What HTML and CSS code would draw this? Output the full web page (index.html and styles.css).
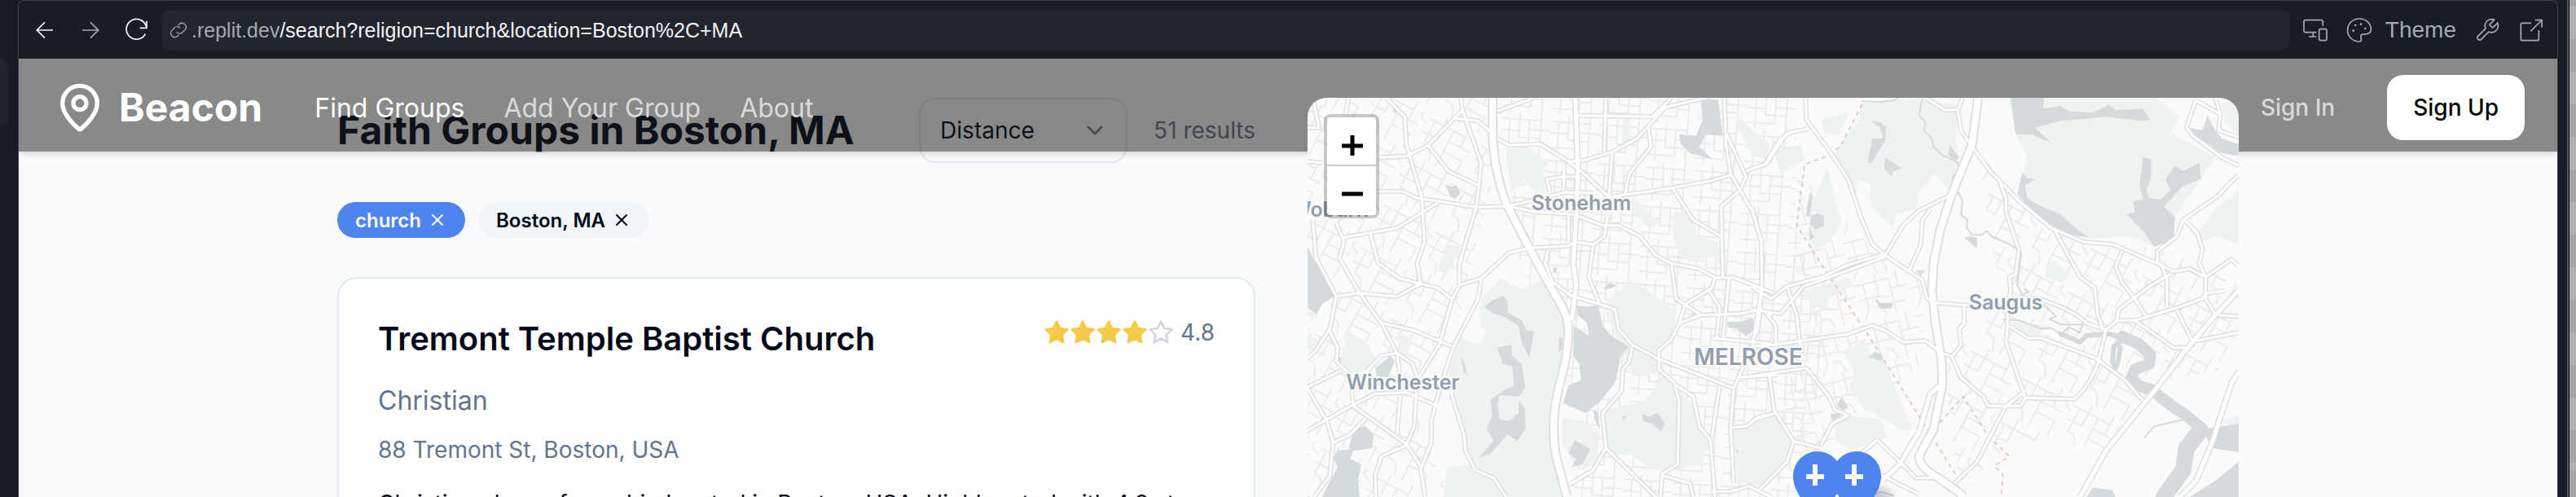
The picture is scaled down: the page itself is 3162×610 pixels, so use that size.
FILE: index.html
```html
<!DOCTYPE html>
<html lang="en">
<head>
<meta charset="utf-8">
<title>Beacon – Faith Groups in Boston, MA</title>
<link rel="stylesheet" href="styles.css">
</head>
<body>
<div class="workspace">
  <div class="side-pane"><div class="side-tab"></div></div>
  <section class="preview">
    <div class="toolbar">
      <div class="tool-nav">
        <button class="tool bright" aria-label="Back"><svg class="icon" viewBox="0 0 24 24"><path d="M19.5 12H5M12 4.7L4.7 12l7.3 7.3"/></svg></button>
        <button class="tool" aria-label="Forward"><svg class="icon" viewBox="0 0 24 24"><path d="M4.5 12H19M12 4.7l7.3 7.3-7.3 7.3"/></svg></button>
        <button class="tool bright" aria-label="Reload"><svg class="icon" viewBox="0 0 24 24"><path d="M21.5 10H15.5M21.8 3.5V10H15.5M21.6 9.8A9.3 9.3 0 1 0 20.6 15.500"/></svg></button>
      </div>
      <label class="address">
        <svg class="icon link-icon" viewBox="0 0 24 24"><path d="M10 14.500a5 5 0 0 0 7 .2l3.300-3.300a5 5 0 0 0-7-7L11.500 6.200M14 9.500a5 5 0 0 0-7-.2l-3.300 3.300a5 5 0 0 0 7 7l1.800-1.800"/></svg>
        <span class="host">.replit.dev</span><input class="path" type="text" aria-label="Address" value="/search?religion=church&amp;location=Boston%2C+MA">
      </label>
      <div class="tool-actions">
        <button class="tool" aria-label="Devices"><svg class="icon" viewBox="0 0 24 24"><path d="M19 8V4.200A1.500 1.500 0 0 0 17.500 2.800H3A1.500 1.500 0 0 0 1.500 4.200V12.500A1.500 1.500 0 0 0 3 14H13M10 14v4M6 18h7"/><rect x="15.500" y="11" width="7" height="10.500" rx="1.200"/></svg></button>
        <button class="tool theme"><svg class="icon" viewBox="0 0 24 24"><path d="M12 1.500C6 1.500 1.200 6 1.200 12S6 22.500 12 22.500c1.500 0 2-1 1.800-2.200-.5-2-1-4.300 1.500-4.500 3.500-.1 7.500-.3 7.500-4.800C22.800 5.500 18 1.500 12 1.500z"/><g class="dots"><circle cx="6.500" cy="12.500" r="1"/><circle cx="8.500" cy="7.500" r="1"/><circle cx="13.500" cy="6.500" r="1"/><circle cx="17.500" cy="10.500" r="1"/></g></svg><span>Theme</span></button>
        <button class="tool" aria-label="Tools"><svg class="icon" viewBox="0 0 24 24"><path d="M14.700 6.300a1 1 0 0 0 0 1.400l1.600 1.600a1 1 0 0 0 1.400 0l3.770-3.770a6 6 0 0 1-7.940 7.940l-6.910 6.910a2.120 2.120 0 0 1-3-3l6.910-6.910a6 6 0 0 1 7.940-7.940l-3.760 3.760z"/></svg></button>
        <button class="tool" aria-label="Open in new tab"><svg class="icon" viewBox="0 0 24 24"><path d="M12 5.500H4A1.500 1.500 0 0 0 2.500 7V20A1.500 1.500 0 0 0 4 21.500H17.500A1.500 1.500 0 0 0 19 20V12M11.500 13L21.500 3M15.500 2.700H21.800V9.500"/></svg></button>
      </div>
    </div>

    <div class="page">
      <header class="site-header">
        <a class="brand" href="#"><svg class="pin" viewBox="0 0 24 24"><path d="M20 10c0 4.993-5.539 10.193-7.399 11.799a1 1 0 0 1-1.202 0C9.539 20.193 4 14.993 4 10a8 8 0 0 1 16 0"/><circle cx="12" cy="10" r="3"/></svg>Beacon</a>
        <nav class="main-nav"><a class="active" href="#">Find Groups</a><a href="#">Add Your Group</a><a href="#">About</a></nav>
        <div class="account"><a href="#">Sign In</a><button class="sign-up">Sign Up</button></div>
      </header>

      <main class="content">
        <section class="results">
          <div class="results-head">
            <h1>Faith Groups in Boston, MA</h1>
            <div class="sort">
              <div class="select-wrap"><select aria-label="Sort by"><option>Distance</option></select><svg class="chevron" viewBox="0 0 24 24"><path d="M6 9l6 6 6-6"/></svg></div>
              <span class="count">51 results</span>
            </div>
          </div>
          <div class="chips">
            <button class="chip primary">church<svg viewBox="0 0 24 24"><path d="M18 6L6 18M6 6l12 12"/></svg></button>
            <button class="chip">Boston, MA<svg viewBox="0 0 24 24"><path d="M18 6L6 18M6 6l12 12"/></svg></button>
          </div>
          <article class="card">
            <div class="card-head">
              <h2>Tremont Temple Baptist Church</h2>
              <div class="rating">
                <svg class="stars" viewBox="0 0 120 24"><defs><path id="star" d="M12 2l3.090 6.260L22 9.270l-5 4.870 1.180 6.880L12 17.770l-6.180 3.250L7 14.140 2 9.270l6.910-1.010L12 2z"/></defs><g class="full"><use href="#star"/><use href="#star" x="24"/><use href="#star" x="48"/><use href="#star" x="72"/></g><use class="empty" href="#star" x="96"/></svg>
                <span>4.8</span>
              </div>
            </div>
            <p class="faith">Christian</p>
            <p class="street">88 Tremont St, Boston, USA</p>
            <p class="about">Christian place of worship located in Boston, USA. Highly rated with 4.8 stars</p>
          </article>
        </section>

        <section class="map" aria-label="Map">
          <svg class="map-art" viewBox="0 0 1143 600">
            <defs>
              <pattern id="streets-a" width="66" height="54" patternUnits="userSpaceOnUse" patternTransform="rotate(-14)"><path d="M0 9H44M12 9V40M28 0V28L40 32M0 28H28M44 9V54M44 22H66M44 40H58M12 40L4 54M54 0V22M20 40Q30 36 32 54"/></pattern>
              <pattern id="streets-b" width="72" height="60" patternUnits="userSpaceOnUse" patternTransform="rotate(28)"><path d="M0 12H50M8 12V44M20 0V30H0M34 12V60M34 26H64M34 40H60M50 0V26M60 40V60M8 44Q20 40 24 60M64 8Q56 14 72 20"/></pattern>
              <pattern id="streets-c" width="60" height="48" patternUnits="userSpaceOnUse" patternTransform="rotate(4)"><path d="M0 8H48M10 8V48M22 0V30M34 8V40M0 22H22M34 20H60M22 30H48M48 0V48M0 40H34"/></pattern>
              <g id="highways">
                <g transform="translate(-5 -10) scale(.3827 .3333)"><path d="M607 30V180Q612 300 650 420L700 530 770 680 830 800Q852 850 850 900 845 1000 820 1090L808 1160Q795 1260 812 1360L845 1500"/></g>
                <g transform="translate(545 -10) scale(.3954 .3333)"><path d="M703 30L685 200 620 390 585 520 565 640 560 740 570 850 590 1000 592 1090 565 1250 520 1350Q520 1390 580 1430L640 1480 660 1500"/></g>
              </g>
              <g id="main-roads">
                <g transform="translate(-5 -10) scale(.3827 .3333)"><path d="M872 30L880 300 875 460 865 640 875 720 860 850"/></g>
                <g transform="translate(545 -10) scale(.3954 .3333)"><path d="M590 1085L555 1120 520 1260 460 1380 405 1440M1512 740L1440 830 1340 970 1250 1110 1100 1330 1020 1500M1512 1040L1490 1080 1430 1300 1380 1440 1330 1500"/></g>
              </g>
              <g id="roads">
                <g transform="translate(-5 -10) scale(.3827 .3333)">
                  <path d="M622 80L740 30M622 180L660 205 760 200 850 265 900 310 980 395 1110 375 1180 362 1310 335 1370 315M880 95L1120 100 1180 30M970 30L965 230M850 265L900 260 990 230 1070 180 1160 65 1290 30M1105 130L1115 210 1045 310 1032 385M990 230L980 395M505 30L510 75 400 205 330 245 245 250M510 75L570 270 555 430 500 640V720L475 780 435 940 370 1060M480 105L560 115 610 165M400 205L465 300 565 355"/>
                  <path d="M265 30L325 100 330 200 380 400 388 560 365 640 375 715M235 375H320L360 398 555 433 650 430 730 410 840 378 930 380M125 545L300 510 440 410M500 720L570 695 660 600 730 583 850 575 870 560 930 570 965 540 975 470M660 430L740 450 870 460 960 500H1010L1080 540 1130 610 1180 640 1270 660 1320 692H1380L1510 750M215 530L240 640 310 695 375 715 430 730 475 770M375 715L300 762 180 750 110 760M105 490L130 560 115 620 180 750 250 860 300 970 310 1060"/>
                  <path d="M30 480L40 620 105 760 85 880 40 960 13 990M250 860L350 885 475 945M570 700L560 770 480 950 435 1110 410 1220V1300L375 1400M13 1095L120 1035M80 880L110 950 105 1000 150 1050M13 1255L160 1160 230 1120 330 1115 430 1165M13 1100L75 1220 95 1300 85 1420 35 1500M155 1110L160 1165 330 1305 375 1385 390 1500M200 1040L250 980 300 970 350 1010 365 1060 355 1240 330 1310 250 1350 230 1420 232 1500M310 1130L300 1270M95 1300L150 1270 200 1210M475 1120L490 1180 515 1270 520 1330 550 1400 610 1430 650 1500"/>
                  <path d="M785 590L775 640 800 710 860 760 950 790 1000 810 1010 880 1055 940 1135 990 1380 1100M930 570L915 690 950 790M1055 940L1045 1000 1025 1030 1020 1110 960 1190 970 1320 1130 1500M1180 640L1195 770 1275 830 1400 825 1470 810 1500 830M1320 692L1310 730 1225 790 1205 860M1275 830L1205 860 1180 920 1140 960V1030L1190 1080 1205 1150 1200 1380 1150 1415 1145 1500M1190 1085L1250 1130 1270 1240 1305 1290 1320 1500M970 1320L930 1400 860 1450M1350 30L1355 200 1370 310 1440 450 1470 560V730L1440 940 1380 1100 1370 1240 1380 1450M1355 160L1420 320 1400 370 1340 430 1345 690M1185 365L1250 480 1340 540M1300 740L1335 800 1325 920M1365 692L1345 920M1310 915L1500 935M1395 1060L1520 1050M1335 1090L1310 1280M1370 1245L1420 1240 1460 1205 1520 1190M13 140H50L30 30M145 30L135 90M13 265L60 270M835 320L780 330 790 375M835 320H880M835 300V370M850 460V560M1420 300L1480 275 1530 180 1568 155M1150 1420L1240 1450 1250 1500M1310 1480H1370L1430 1460 1500 1500"/>
                </g>
                <g transform="translate(545 -10) scale(.3954 .3333)">
                  <path d="M168 30L170 110 250 240 300 330 340 470 375 570 415 610 490 670 530 700 545 770 570 785 680 795M0 290L45 275 110 160 175 145M0 430L30 560 32 740 20 880 0 935M0 725L60 770 110 725 220 690 300 645 415 605M415 615L220 700 160 725 130 770 90 825 0 810M110 725L140 830 150 935M0 945L70 940 300 900 375 868 420 890 470 930 540 925 590 970 620 980 650 1060 720 1130 735 1165H835L850 1135 1000 1140Q1040 1110 1075 1010L1100 885M415 610L470 500 520 445 625 385M555 440L530 480 525 570 490 665M540 30L600 75H640L655 30M40 815L75 870V940"/>
                  <path d="M640 75L650 150 685 210 740 300 790 360 830 410 930 510 1030 560 1120 570 1200 610 1260 640 1310 670 1360 660 1410 690 1490 625 1512 650M770 340L790 400V450L830 590 820 680 800 690 805 740 795 780V870L790 930 850 1135M850 1110L790 1165 700 1370 630 1450M800 870L860 915H900L1070 990 1160 1070 1215 1145M830 765L895 770 960 800 1010 830 1040 860 1100 885 1135 850 1190 850 1310 950H1350M660 795V860L645 880 650 940 625 980M940 515L1020 690 1065 730 1075 830 1090 880M1150 595L1130 650 1150 710 1190 770 1225 835M1135 845L1140 810 1240 720 1300 680M1190 850L1330 800 1400 770 1410 750 1470 740"/>
                  <path d="M1260 640V595L1320 540 1340 480 1450 390 1480 350 1512 315M1345 480L1385 530 1400 590 1390 640 1410 690V770L1440 830M1270 640L1290 700V800M1320 810L1370 930M1380 925L1512 895M1450 830L1512 835M1380 35L1350 140 1370 170 1460 250 1512 280M1440 30L1455 90 1450 150 1512 175M1380 40L1455 90M0 1055L170 1025 240 1130 260 1180 300 1200 250 1230 215 1310M55 1050L70 1180 130 1295 215 1320M0 1220L80 1190M130 1300L110 1370 20 1480M390 1290L460 1370 510 1430H560M390 1290L300 1380M405 1420L520 1490"/>
                </g>
              </g>
            </defs>
            <rect class="land" width="1143" height="600"/>
            <g class="streets">
              <path fill="url(#streets-b)" d="M0 0H225V110L190 260 130 380 175 490 240 600H0z"/>
              <path fill="url(#streets-c)" d="M235 0H600V160L640 300 600 480 560 600H300L330 380 260 200z"/>
              <path fill="url(#streets-a)" d="M600 90L690 180 760 230 750 330 620 440 580 420 600 300z"/>
              <path fill="url(#streets-b)" d="M820 60L900 160 1060 190 1143 230V330L1040 350 980 430 870 420 800 480 780 330 850 240z"/>
            </g>
            <g class="green">
              <g transform="translate(-5 -10) scale(.3827 .3333)"><path d="M630 695L700 735 770 700 840 850V930L790 1200 800 1350 830 1500H650L550 1400 490 1180 465 1040 500 915 560 935 585 900 565 860 570 770zM648 210L715 208 785 265 770 300 775 385 740 370 710 330 665 380zM460 565L503 580 500 610 460 670H428zM960 800L1050 700 1190 810V880L1140 990 1160 1040 1060 1055 1000 900zM1000 1170L1100 1150 1150 1050 1240 1150 1300 1290 1280 1380 1190 1400 1120 1400 1050 1345H1000L960 1290 970 1190zM140 890L190 920 235 990 170 1055 120 1020zM305 895L350 920 330 980 300 960zM1380 1255L1440 1240 1520 1200 1560 1290 1520 1400 1440 1455 1390 1440zM1385 85L1440 150 1495 200 1490 260 1440 240 1395 150zM1190 450H1250L1260 540 1330 560 1335 610 1270 625 1215 620 1185 550zM1060 400L1100 440 1140 490 1110 510 1060 460zM13 890L50 930 13 965zM830 1210L900 1220 950 1260 940 1380 880 1400 830 1300zM460 1390L540 1380 650 1500H450zM1025 100H1050L1045 190 1020 195zM13 760L60 790 40 840 13 830z"/></g>
              <g transform="translate(545 -10) scale(.3954 .3333)"><path d="M345 45L530 35 640 60 635 180 645 290 610 370 570 310 520 375 510 440 450 460 440 510 370 430V350L330 330 320 410 255 240 300 160 330 120zM215 110L300 85 270 170 225 160zM70 230L150 200 165 260 90 310zM235 285L280 490 240 560 200 590 180 500 185 420 215 350zM800 30H1255L1330 100 1300 160 1440 250 1330 440 1250 580 1180 540 1050 550 830 410 855 240 820 170zM1390 520L1440 440 1512 370V570L1450 540 1400 560zM350 925L380 1000 410 990 500 1250 470 1255 390 1200 350 1170 300 1100 320 1060 290 960zM160 740L300 690 315 720 240 770 230 815 190 790zM910 650L940 630 990 680 960 710 915 690zM805 855L930 870 890 905 850 900zM0 1220L70 1200 125 1300 100 1370 30 1460 0 1450zM260 1200L400 1210 420 1280 310 1330 260 1290zM1460 1220L1512 1200V1260zM1460 50L1512 30V170L1470 120z"/></g>
            </g>
            <g class="water">
              <g transform="translate(-5 -10) scale(.3827 .3333)"><path d="M13 580L40 640 95 720 100 760 60 790 40 825 13 800zM1275 40L1300 34 1330 38 1345 170 1290 165 1270 210 1310 255 1240 235 1210 200 1205 165 1260 170 1280 110zM455 350L475 358 490 350 503 380 485 405 470 390zM580 800L600 780 640 760 655 780V820L700 850 715 885 740 890 735 920 725 990 700 930 690 870 640 835 610 825zM620 950L668 940V980L700 1010 712 1100 690 1130 630 1125 622 1160 630 1215 660 1220 690 1190V1145L710 1170 712 1250 685 1295 655 1270 600 1340 562 1357 610 1290 588 1250 605 1200 600 1140 640 1110 675 1090 670 1020 640 1010zM875 795L910 800 945 795 960 870 990 910 1043 945 1015 990 1000 1080 950 1150 905 1190 833 1155 850 1090 890 1070 885 1010 865 980 868 870 915 905 910 860 880 830zM230 1025L280 980 293 1000 270 1060 235 1055zM160 1250L200 1240 225 1270 220 1320 160 1330 150 1360 185 1380 175 1440 180 1500H60L90 1430 110 1390 95 1360 110 1330 145 1325zM870 1290L890 1305 920 1325 895 1380 860 1390 875 1360 850 1340zM1085 1195L1110 1205 1135 1190 1160 1230 1145 1260 1120 1230 1090 1220zM1360 855L1400 855 1440 840 1448 880 1420 908 1390 880 1360 875zM820 910L832 915 830 960 818 965zM960 735L980 712 1003 720 985 733zM505 985L515 1000 525 1050 515 1045zM930 1180L945 1190 950 1250 935 1220zM800 655L815 655 810 678 802 672zM105 985L122 985 120 1005 105 1003zM285 75L300 70 295 90zM1022 1205L1035 1200 1025 1218zM1385 1325L1397 1330 1390 1340z"/></g>
              <g transform="translate(545 -10) scale(.3954 .3333)"><path d="M805 30H908L905 70 960 60 985 80 1060 85 1110 55 1130 75 1215 70 1238 112 1210 115 1100 100 960 115 880 140 930 195 870 165H820zM370 115L400 120 418 140 415 190 385 245 370 275 360 265 375 180 408 180 400 140zM415 250L467 290 440 300 435 320 412 290zM615 205L645 250 630 262 610 240zM840 305L855 325 880 330 850 350 855 400 900 430 960 460 1000 505 1050 545 1000 535 920 505 825 385zM1215 250L1240 255V330L1225 370 1235 400 1270 405 1300 370 1285 330 1315 280 1340 300 1390 270 1395 330 1340 355 1280 430 1315 470 1310 550 1250 580 1215 520 1165 460 1190 450 1185 410 1215 405 1205 350zM1360 140L1400 150 1415 95 1435 140 1460 180 1512 200V245L1450 230 1420 200 1380 180zM180 380L190 390 180 470 168 465zM185 465L205 455 225 465V500L200 515 180 495zM178 505L195 545 180 555zM660 545L680 540 700 545V585L680 565zM380 765L400 785 440 785 435 805 400 808zM365 985L385 962 410 990 395 998zM265 1160L280 1130 300 1170 285 1185zM245 1195L290 1190 250 1220zM510 665H540L525 685zM1400 1250L1512 1230V1335L1430 1320zM1512 1370V1500H1360L1440 1440zM1040 1500L1060 1465 1120 1475 1130 1500z"/></g>
            </g>
            <g class="rivers" transform="translate(545 -10) scale(.3954 .3333)">
              <path class="creek" d="M345 42L400 46 440 40 455 32M530 35L520 95 540 120 535 150 560 180 565 210 590 240 610 250 640 270 645 300 625 320V350L645 385 655 410 650 460 670 480 668 510 685 535 715 535 730 520 745 540 810 575 838 600 830 660 825 720 840 755 860 745 850 735"/>
              <path class="creek" d="M780 845L830 850 900 880 930 878 960 900 985 875 1020 895 1028 865 960 865 925 845 945 835 905 790M1220 1280L1250 1240 1340 1215M365 1500L400 1480 440 1495"/>
              <path class="river" d="M960 900L990 915 1020 930 1040 905 1110 900 1150 915"/>
              <path class="river" d="M1150 925L1125 945 1120 1000 1130 1025 1138 1000 1145 950"/>
              <path class="river wide" d="M1150 910L1200 935 1238 975 1235 1010 1190 1030 1180 1060 1200 1090 1240 1105"/>
              <path class="river wide" d="M1240 1105L1300 1160 1350 1200 1400 1250"/>
              <path class="river delta" d="M1390 1260L1350 1320 1340 1400 1280 1500"/>
            </g>
            <g class="border" transform="translate(545 -10) scale(.3954 .3333)"><path d="M343 55L275 210 235 245 165 275 140 500 220 650 360 900 540 1240 635 1420M585 1225L657 1130 735 1275 800 1350 755 1385 780 1420 775 1500"/></g>
            <use class="casing" href="#roads"/><use class="casing main" href="#main-roads"/><use class="casing highway" href="#highways"/>
            <use class="fill" href="#roads"/><use class="fill main" href="#main-roads"/><use class="fill highway" href="#highways"/>
            <g class="places">
              <text x="336" y="138" text-anchor="middle">Stoneham</text>
              <text x="75" y="146" text-anchor="end">Woburn</text>
              <text x="117" y="358" text-anchor="middle">Winchester</text>
              <text x="857" y="260" text-anchor="middle">Saugus</text>
              <text class="city" x="541" y="328" text-anchor="middle">MELROSE</text>
            </g>
            <defs><filter id="soft"><feGaussianBlur stdDeviation="6"/></filter></defs>
            <ellipse class="pin-shadow" cx="696" cy="492" rx="22" ry="14" filter="url(#soft)"/>
            <g class="marker"><path d="M626 434a30 30 0 0 1 30 30c0 22-18 36-30 56-12-20-30-34-30-56a30 30 0 0 1 30-30zM674 434a30 30 0 0 1 30 30c0 22-18 36-30 56-12-20-30-34-30-56a30 30 0 0 1 30-30z"/><path class="cross" d="M623 450V476M612 465H634M671 450V476M660 465H682"/></g>
          </svg>
          <div class="zoom"><button aria-label="Zoom in"><svg viewBox="0 0 60 60"><path d="M18 35H44M31 22V47"/></svg></button><button aria-label="Zoom out"><svg viewBox="0 0 60 60"><path d="M18 34H44"/></svg></button></div>
        </section>
      </main>
    </div>
  </section>
  <div class="gutter"></div>
  <div class="desktop"></div>
</div>
</body>
</html>
```
FILE: styles.css
```css
* { box-sizing: border-box; }
body { margin: 0; overflow: hidden; background: #191c24; font-family: Inter, "Liberation Sans", sans-serif; color: #020817; }
button, input, select { font: inherit; color: inherit; }
button { border: 0; background: none; padding: 0; cursor: pointer; }
a { color: inherit; text-decoration: none; }
h1, h2, p { margin: 0; }
svg { display: block; flex: none; }

.workspace { display: flex; height: 100vh; }
.side-pane { flex: 0 0 22px; padding-top: 72px; background: #191c24; }
.side-tab { width: 10px; height: 82px; background: #20232b; border-radius: 0 10px 10px 0; }
.preview { flex: 1; min-width: 0; display: flex; flex-direction: column; border: 1px solid #3c404a; border-bottom: 0; border-radius: 8px 8px 0 0; overflow: hidden; }
.gutter { flex: 0 0 13px; background: #191c24; border-right: 2px solid #55575c; box-shadow: 1px 0 #000; z-index: 1; }
.desktop { flex: 0 0 9px; background: repeating-linear-gradient(#a4a7a5 0 40px, #b0b0af 40px 80px) 0 -32px; }

.toolbar { flex: 0 0 71px; display: flex; align-items: center; gap: 16px; padding: 0 16px; background: #191c24; }
.tool-nav { display: flex; gap: 24px; }
.tool-actions { display: flex; gap: 22px; font-size: 28px; font-family: "Liberation Sans", sans-serif; }
.tool { display: flex; align-items: center; color: #a5a8b1; }
.tool.bright { color: #f2f3f5; }
.theme { gap: 16px; line-height: 32px; }
.icon { width: 32px; height: 32px; fill: none; stroke: currentColor; stroke-width: 1.3; }
.dots { fill: currentColor; stroke: none; }
.address { flex: 1; display: flex; align-items: center; height: 48px; padding: 0 8px; background: #22252e; border-radius: 8px; font: 25px/32px "Liberation Sans", sans-serif; color: #a5a8b1; }
.link-icon { width: 24px; height: 24px; margin-right: 4px; }
.path { flex: 1; min-width: 0; border: 0; padding: 0; background: none; color: #f2f3f5; outline: 0; }

.page { position: relative; flex: 1; min-height: 0; background: #f9fafc; }
.site-header { position: absolute; z-index: 2; top: 0; left: 0; right: 0; display: flex; align-items: center; padding: 20px 40px 14px 43px; background: rgba(30, 28, 26, .51); box-shadow: 0 2px 8px rgba(0, 0, 0, .18); color: #dadada; font-size: 32px; }
.brand { display: flex; align-items: center; gap: 16px; font-size: 48px; line-height: 64px; font-weight: 700; color: #fff; }
.pin { width: 64px; height: 64px; fill: none; stroke: currentColor; stroke-width: 2; stroke-linecap: round; stroke-linejoin: round; }
.main-nav { display: flex; gap: 48px; margin-left: 64px; }
.main-nav .active { color: #fff; }
.account { display: flex; align-items: center; gap: 64px; margin-left: auto; font-size: 28px; font-weight: 500; }
.sign-up { height: 80px; padding: 0 32px; background: #fff; color: #000; border-radius: 20px; }

.content { display: grid; grid-template-columns: 1127fr 1143fr; gap: 64px; align-items: start; max-width: 2334px; margin: 0 auto; padding-top: 48px; }
.results-head { display: flex; align-items: center; justify-content: space-between; height: 80px; }
h1 { font-size: 48px; line-height: 64px; font-weight: 700; white-space: nowrap; }
.sort { display: flex; align-items: center; gap: 32px; font-size: 28px; }
.select-wrap { position: relative; width: 256px; }
.select-wrap select { width: 100%; height: 80px; padding: 0 24px; border: 2px solid #e2e8f0; border-radius: 20px; background: none; appearance: none; }
.chevron { position: absolute; right: 24px; top: 24px; width: 32px; height: 32px; fill: none; stroke: #777d88; stroke-width: 2; stroke-linecap: round; stroke-linejoin: round; pointer-events: none; }
.count { color: #64748b; }
.chips { display: flex; gap: 16px; margin: 48px 0; }
.chip { display: flex; align-items: center; gap: 8px; height: 44px; padding: 0 22px; border-radius: 22px; background: #f1f5f9; font-size: 24px; font-weight: 600; }
.chip.primary { background: #4f83ef; color: #f8fafc; }
.chip svg { width: 24px; height: 24px; fill: none; stroke: currentColor; stroke-width: 2; stroke-linecap: round; }

.card { padding: 46px 48px; min-height: 400px; background: #fff; border: 2px solid #e2e8f0; border-radius: 24px; }
.card-head { display: flex; justify-content: space-between; }
h2 { font-size: 40px; line-height: 56px; font-weight: 600; white-space: nowrap; }
.rating { display: flex; align-items: center; gap: 8px; height: 40px; color: #64748b; font-size: 28px; }
.stars { width: 160px; height: 32px; stroke-width: 2; stroke-linejoin: round; }
.full { fill: #f3cb48; stroke: #f3cb48; }
.empty { fill: none; stroke: #d1d5db; }
.faith { margin-top: 24px; font-size: 32px; line-height: 48px; color: #64748b; }
.street { margin-top: 16px; font-size: 28px; line-height: 40px; color: #64748b; }
.about { margin-top: 26px; font-size: 28px; line-height: 40px; white-space: nowrap; }

.map { position: relative; z-index: 3; overflow: hidden; border-radius: 24px 24px 0 0; }
.map-art { width: 100%; height: auto; fill: none; }
.map-art path { vector-effect: non-scaling-stroke; stroke-linejoin: round; }
.land { fill: #fafaf8; }
pattern path { stroke: #ececec; stroke-width: 2; }
.green { fill: #eef3ef; }
.water { fill: #d5dadd; }
.rivers { stroke: #d5dadd; stroke-linecap: round; }
.creek { stroke-width: 2; }
.river { stroke-width: 6; }
.river.wide { stroke-width: 14; }
.river.delta { stroke-width: 20; }
.border { stroke: #e3c9cd; stroke-width: 2; stroke-dasharray: 5 5; }
.casing { stroke: #dfdfdf; stroke-width: 6; }
.fill { stroke: #fff; stroke-width: 3; }
.casing.main { stroke-width: 8; }
.fill.main { stroke-width: 5; }
.casing.highway { stroke-width: 12; }
.fill.highway { stroke-width: 8; }
.places { font-size: 25px; font-weight: 600; fill: #929dad; stroke: #fafaf8; stroke-width: 4; paint-order: stroke; }
.places .city { font-size: 28px; }
.pin-shadow { fill: rgba(0, 0, 0, .2); }
.marker { fill: #4f83ef; }
.cross { stroke: #fff; stroke-width: 6; }
.zoom { position: absolute; top: 20px; left: 20px; display: flex; flex-direction: column; border: 4px solid rgba(0, 0, 0, .2); border-radius: 8px; background-clip: padding-box; overflow: hidden; }
.zoom button { width: 60px; height: 60px; background: #fff; }
.zoom button:first-child { border-bottom: 2px solid #ccc; }
.zoom svg { width: 60px; height: 60px; fill: none; stroke: #000; stroke-width: 5; }
```
